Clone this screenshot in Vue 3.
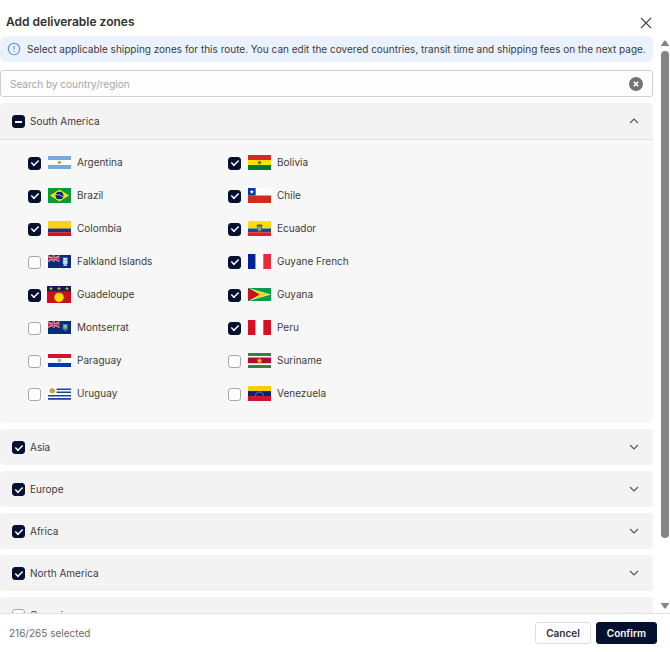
<template>
  <div class="dialog" role="dialog" aria-labelledby="dialog-title">
    <header class="head">
      <h1 id="dialog-title" class="title">Add deliverable zones</h1>
      <button class="icon-btn close" type="button" aria-label="Close">
        <svg viewBox="0 0 12 12" width="12" height="12"><path d="M1 1l10 10M11 1L1 11"/></svg>
      </button>
    </header>

    <div class="body">
      <main class="content">
        <p class="notice">
          <svg class="info" viewBox="0 0 14 14" width="14" height="14">
            <circle cx="7" cy="7" r="5.7"/><path d="M7 4v3.6M7 9v1"/>
          </svg>
          <span>Select applicable shipping zones for this route. You can edit the covered countries, transit time and shipping fees on the next page.</span>
        </p>

        <div class="search">
          <input v-model="keyword" class="search-input" type="text" aria-label="Search by country/region" placeholder="Search by country/region" />
          <button class="icon-btn" type="button" aria-label="Clear" @click="keyword = ''">
            <svg class="clear" viewBox="0 0 14 14" width="14" height="14">
              <circle cx="7" cy="7" r="7"/><path d="M4.8 4.8l4.4 4.4M9.2 4.8L4.8 9.2"/>
            </svg>
          </button>
        </div>

        <section v-for="zone in zones" :key="zone.name" class="zone">
          <div class="zone-head" :class="{ open: zone.open }">
            <label class="option">
              <input v-model="zone.checked" class="check" type="checkbox" :indeterminate.prop="zone.partial" />
              <span class="name">{{ zone.name }}</span>
            </label>
            <button class="icon-btn" type="button" :aria-label="'Toggle ' + zone.name" :aria-expanded="zone.open" @click="zone.open = !zone.open">
              <svg class="chevron" :class="{ up: zone.open }" viewBox="0 0 10 6" width="10" height="6"><path d="M1 1l4 4 4-4"/></svg>
            </button>
          </div>
          <div v-if="zone.open && zone.countries" class="countries">
            <label v-for="c in zone.countries" :key="c.name" class="option country">
              <input v-model="c.checked" class="check" type="checkbox" />
              <span class="flag" :class="c.shape">
                <svg viewBox="0 0 24 16" preserveAspectRatio="none" aria-hidden="true" v-html="c.flag"></svg>
              </span>
              <span class="name">{{ c.name }}</span>
            </label>
          </div>
        </section>
      </main>

      <div class="scrollbar" aria-hidden="true">
        <svg viewBox="0 0 8 6" width="8" height="6"><path d="M3.4 .4h1.200L8 5.400V6H0v-.6z"/></svg>
        <div class="track"><div class="thumb"></div></div>
        <svg viewBox="0 0 8 6" width="8" height="6"><path d="M3.400 5.600h1.200L8 .6V0H0v.6z"/></svg>
      </div>
    </div>

    <footer class="foot">
      <span class="count">216/265 selected</span>
      <button class="btn" type="button">Cancel</button>
      <button class="btn primary" type="button">Confirm</button>
    </footer>
  </div>
</template>

<script setup>
import { ref, reactive } from 'vue'

const keyword = ref('')

// horizontal stripes from [color, height] pairs, top to bottom
const rows = (...list) => {
  let y = 0
  return list.map(([color, h]) => {
    const r = `<rect y="${y}" width="24" height="${h}" fill="${color}"/>`
    y += h
    return r
  }).join('')
}
const cols = (...list) =>
  list.map((color, i) => `<rect x="${i * 8}" width="8" height="16" fill="${color}"/>`).join('')

const ensign =
  '<rect width="24" height="16" fill="#0a2b75"/>' +
  '<path d="M0 1l12 7M12 1L0 8" stroke="#e9c3d0" stroke-width="1.4"/>' +
  '<path d="M0 1l12 7M12 1L0 8" stroke="#d9405a" stroke-width=".7"/>' +
  '<path d="M6 0v8M0 4.200h12" stroke="#f3dfe5" stroke-width="2.200"/>' +
  '<path d="M6 0v8M0 4.200h12" stroke="#d22f48" stroke-width="1.400"/>'

const flags = {
  argentina: rows(['#75aadb', 5], ['#fff', 6], ['#75aadb', 5]) +
    '<circle cx="12" cy="8" r="1.700" fill="#e2a23b"/><circle cx="12" cy="8" r=".9" fill="#9a6a35"/>',
  bolivia: rows(['#d52b1e', 5.4], ['#f9e300', 5.3], ['#007934', 5.3]) +
    '<circle cx="12" cy="8" r="2" fill="#a88328"/><circle cx="12" cy="8" r="1" fill="#5d6a3a"/>',
  brazil: '<rect width="24" height="16" fill="#009b3a"/><path d="M12 1.500L22 8l-10 6.500L2 8z" fill="#fedf00"/>' +
    '<circle cx="12" cy="8" r="4.100" fill="#002776"/><path d="M8.300 7.200q4-.8 7.400 2.200" stroke="#fff" stroke-width=".7" fill="none"/>',
  chile: rows(['#fff', 8], ['#d52b1e', 8]) + '<rect width="8" height="8" fill="#0039a6"/>' +
    '<path d="M4 1.800l.6 1.500h1.600L5 4.300l.5 1.700L4 5l-1.500 1 .5-1.700-1.200-1h1.600z" fill="#fff"/>',
  colombia: rows(['#fcd116', 8], ['#1c3578', 4], ['#ce1126', 4]),
  ecuador: rows(['#ffdd00', 8], ['#034ea2', 4], ['#ed1c24', 4]) +
    '<path d="M8.500 4.500q3.500-2 7 0l-1 1.500v4L12 12.500 9.500 10V6z" fill="#71613e"/><ellipse cx="12" cy="7.800" rx="1.700" ry="2.400" fill="#69ad91"/><path d="M10.500 9h3" stroke="#d4ac36"/>',
  falkland: ensign + '<path d="M15.500 3h5v7q-1 2-2.500 2.800-1.500-.8-2.500-2.800z" fill="#7fb2d4"/><path d="M16.500 4h3v2h-3z" fill="#e8eee9"/><path d="M16 8h4M16 10h4M16 12.700h4" stroke="#fff"/>',
  france: cols('#002395', '#fff', '#ed2939'),
  guadeloupe: '<rect width="24" height="16" fill="#dc0714"/><rect width="24" height="5" fill="#111b60"/>' +
    '<path d="M4 1v3M2.500 2.500h3M12 1v3M10.500 2.500h3M20 1v3M18.500 2.500h3" stroke="#f4cc22" stroke-width=".9"/>' +
    '<path d="M6 5l3 2M18 5l-3 2M7 15l-2-4M17 15l2-4" stroke="#276b2d" stroke-width="1.200"/><ellipse cx="12" cy="10.700" rx="4.700" ry="4.400" fill="#ffdd00"/><path d="M12 6l1 2h-2z" fill="#b49618"/>',
  guyana: '<rect width="24" height="16" fill="#009e49"/><path d="M0 0l24 8L0 16z" fill="#fff"/><path d="M0 .7L22.500 8 0 15.300z" fill="#fcd116"/>' +
    '<path d="M0 0l12 8L0 16z" fill="#222"/><path d="M0 .8L11 8 0 15.200z" fill="#ce1126"/>',
  montserrat: ensign + '<path d="M15.500 4h5v5q-.6 2.600-2.500 3.400-2-.8-2.500-3.400z" fill="#4da1b1"/><path d="M16 9.500h4q-.5 1.700-2 2.300-1.500-.6-2-2.300z" fill="#7a563b"/><path d="M18 5v4M17 6h2" stroke="#dce77d" stroke-width=".8"/>',
  peru: cols('#d91023', '#fff', '#d91023'),
  paraguay: rows(['#d0142b', 5], ['#fff', 6], ['#0038a8', 5]) +
    '<circle cx="12" cy="8" r="1.600" fill="none" stroke="#77806b" stroke-width=".9"/><circle cx="12" cy="8" r=".7" fill="#b58e42"/>',
  suriname: rows(['#377e3f', 3.2], ['#fff', 1.600], ['#b40a2d', 6.400], ['#fff', 1.600], ['#377e3f', 3.2]) +
    '<path d="M12 4.800l.9 2.300h2.500l-2 1.500.8 2.500L12 9.600l-2.200 1.500.8-2.500-2-1.500h2.500z" fill="#ecc81d"/>',
  uruguay: '<rect width="24" height="16" fill="#fff"/><path d="M9 2.700h15M9 6.400h15M0 10.800h24M0 14.600h24" stroke="#1d3c9c" stroke-width="1.900"/>' +
    '<ellipse cx="4.500" cy="4.500" rx="2.700" ry="3.100" fill="#c89d32"/><path d="M4.500 .5v8M1 4.500h7M2 1.700l5 5.600M7 1.700L2 7.300" stroke="#c8a84d" stroke-width=".6"/>',
  venezuela: rows(['#ffcc00', 5.4], ['#00247d', 5.3], ['#cf142b', 5.3]) +
    '<path d="M8 10.500q0-4 4-4t4 4" stroke="#c7cdec" stroke-width=".9" stroke-dasharray="1 .6" fill="none"/>'
}

const zones = reactive([
  {
    name: 'South America',
    checked: false,
    partial: true,
    open: true,
    countries: [
      { name: 'Argentina', flag: flags.argentina, checked: true, shape: 'low' },
      { name: 'Bolivia', flag: flags.bolivia, checked: true },
      { name: 'Brazil', flag: flags.brazil, checked: true },
      { name: 'Chile', flag: flags.chile, checked: true },
      { name: 'Colombia', flag: flags.colombia, checked: true },
      { name: 'Ecuador', flag: flags.ecuador, checked: true },
      { name: 'Falkland Islands', flag: flags.falkland, checked: false, shape: 'low' },
      { name: 'Guyane French', flag: flags.france, checked: true },
      { name: 'Guadeloupe', flag: flags.guadeloupe, checked: true, shape: 'large' },
      { name: 'Guyana', flag: flags.guyana, checked: true, shape: 'low' },
      { name: 'Montserrat', flag: flags.montserrat, checked: false, shape: 'low' },
      { name: 'Peru', flag: flags.peru, checked: true },
      { name: 'Paraguay', flag: flags.paraguay, checked: false, shape: 'low' },
      { name: 'Suriname', flag: flags.suriname, checked: false },
      { name: 'Uruguay', flag: flags.uruguay, checked: false, shape: 'low' },
      { name: 'Venezuela', flag: flags.venezuela, checked: false }
    ]
  },
  { name: 'Asia', checked: true, partial: false, open: false },
  { name: 'Europe', checked: true, partial: false, open: false },
  { name: 'Africa', checked: true, partial: false, open: false },
  { name: 'North America', checked: true, partial: false, open: false },
  { name: 'Oceania', checked: false, partial: false, open: false }
])
</script>

<style>
body{ margin:0; background:#fff; }
</style>

<style scoped>
*{ box-sizing:border-box; }
.dialog{
  height:100vh; display:flex; flex-direction:column; background:#fff; color:#3c3c3c;
  font-family:Inter, "Liberation Sans", sans-serif; font-size:10px; line-height:16px;
}
button, input{ font:inherit; color:inherit; }
svg{ display:block; }
.icon-btn{
  display:flex; align-items:center; justify-content:center; width:14px; height:14px;
  padding:0; border:none; background:none; cursor:pointer;
}

.head{ display:flex; align-items:flex-end; justify-content:space-between; padding:14px 17px 6px 6px; }
.title{ margin:0; font-size:12px; font-weight:600; line-height:16px; color:#303030; }
.close path{ stroke:#444; stroke-width:1.1; fill:none; }

.body{ flex:1; min-height:0; display:flex; }
.content{
  flex:1; min-width:0; display:flex; flex-direction:column; gap:6px;
  overflow-y:auto; scrollbar-width:none;
}
.content > *{ flex-shrink:0; }
.notice{
  display:flex; align-items:center; gap:6px; margin:0 0 2px; padding:5px 0 5px 7px;
  border-radius:6px; background:#ebf2ff;
}
.info{ flex-shrink:0; }
.info circle, .info path{ fill:none; stroke:#5c8df0; stroke-width:1.1; }
.search{
  display:flex; align-items:center; height:27px; padding:0 9px;
  border:1px solid #cfcfcf; border-radius:3px; background:#fdfdfd;
}
.search-input{ flex:1; min-width:0; padding:0; border:none; outline:none; background:none; }
.search-input::placeholder{ color:#a6a6a6; opacity:1; }
.clear circle{ fill:#757575; }
.clear path{ stroke:#fff; stroke-width:1.6; }

.zone{ border-radius:4px; background:#f7f7f7; overflow:hidden; }
.zone-head{
  display:flex; align-items:center; justify-content:space-between; height:36px;
  padding:0 12px; background:#f3f3f3;
}
.zone-head.open{ height:37px; border-bottom:1px solid #e4e4e4; }
.option{ display:flex; align-items:center; gap:6px; cursor:pointer; }
.zone-head .option{ gap:5px; }
.name{ padding-bottom:1px; }
.chevron path{ fill:none; stroke:#555; stroke-width:1.1; }
.chevron.up{ transform:rotate(180deg); }
.countries{ display:grid; grid-template-columns:repeat(2, 200px); padding:6px 28px 13px; }
.country{ height:33px; }
.check{
  appearance:none; flex-shrink:0; display:grid; place-items:center; width:13px; height:13px;
  margin:1px 0 0; border:1px solid #a8a8a8; border-radius:3px; background:#fff; cursor:pointer;
}
.check:checked, .check:indeterminate{ border-color:#04102f; background:#04102f; }
.check:checked::after{
  content:""; width:8px; height:4px; border:solid #fff; border-width:0 0 2px 2px;
  transform:translateY(-1px) rotate(-45deg) scale(.75);
}
.check:indeterminate::after{ content:""; width:7px; height:2px; border:none; background:#fff; transform:none; }
.flag{ display:flex; align-items:center; justify-content:center; width:24px; height:16px; }
.flag svg{ flex-shrink:0; width:23px; height:15px; }
.flag.low svg{ height:13px; }
.flag.large svg{ width:24px; height:17px; }

.scrollbar{
  display:flex; flex-direction:column; align-items:center; gap:5px; width:17px;
  padding:4px 1px 4px 8px; background:#fff;
}
.scrollbar path{ fill:#858585; }
.track{ flex:1; width:8px; }
.thumb{ height:89%; border-radius:4px; background:#858585; }

.foot{
  display:flex; align-items:center; gap:5px; height:39px; padding:0 13px 0 9px;
  border-top:1px solid #e2e2e2; background:#fff;
}
.count{ flex:1; color:#6b6b6b; }
.btn{
  height:22px; padding:0 10px; border:1px solid #dedede; border-radius:3px;
  background:#fff; color:#303030; font-weight:600; line-height:16px; cursor:pointer;
}
.btn.primary{ border-color:#04102f; background:#04102f; color:#fff; }
</style>
